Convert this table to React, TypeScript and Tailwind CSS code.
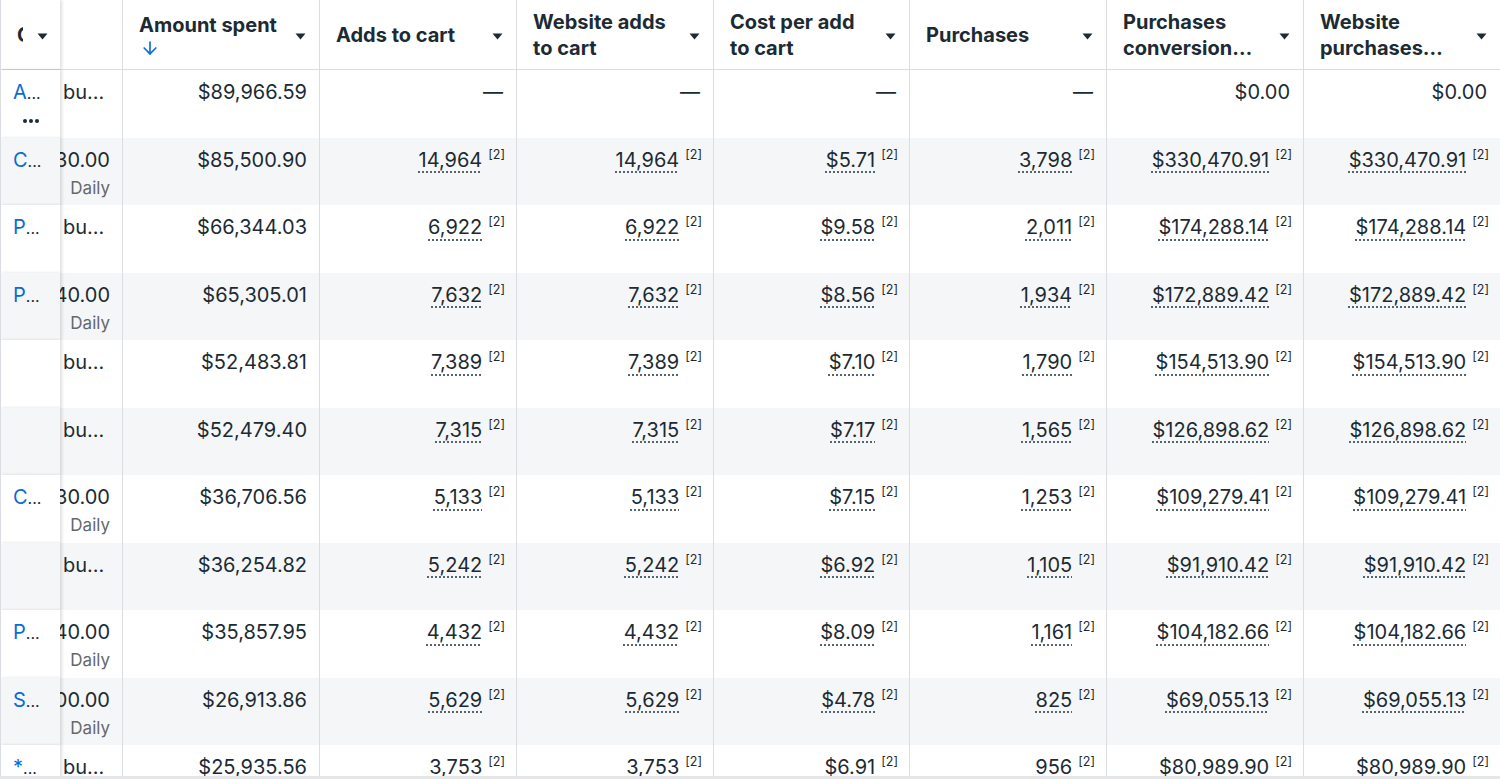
import { ArrowDown } from "lucide-react";

type Row = {
  name: string;
  budget: "bu" | string;
  spent: string;
  vals: string[];
};

const rows: Row[] = [
  { name: "A", budget: "bu", spent: "$89,966.59", vals: ["—", "—", "—", "—", "$0.00", "$0.00"] },
  { name: "C", budget: "$1,230.00", spent: "$85,500.90", vals: ["14,964", "14,964", "$5.71", "3,798", "$330,470.91", "$330,470.91"] },
  { name: "P", budget: "bu", spent: "$66,344.03", vals: ["6,922", "6,922", "$9.58", "2,011", "$174,288.14", "$174,288.14"] },
  { name: "P", budget: "$1,140.00", spent: "$65,305.01", vals: ["7,632", "7,632", "$8.56", "1,934", "$172,889.42", "$172,889.42"] },
  { name: "", budget: "bu", spent: "$52,483.81", vals: ["7,389", "7,389", "$7.10", "1,790", "$154,513.90", "$154,513.90"] },
  { name: "", budget: "bu", spent: "$52,479.40", vals: ["7,315", "7,315", "$7.17", "1,565", "$126,898.62", "$126,898.62"] },
  { name: "C", budget: "$1,230.00", spent: "$36,706.56", vals: ["5,133", "5,133", "$7.15", "1,253", "$109,279.41", "$109,279.41"] },
  { name: "", budget: "bu", spent: "$36,254.82", vals: ["5,242", "5,242", "$6.92", "1,105", "$91,910.42", "$91,910.42"] },
  { name: "P", budget: "$1,140.00", spent: "$35,857.95", vals: ["4,432", "4,432", "$8.09", "1,161", "$104,182.66", "$104,182.66"] },
  { name: "S", budget: "$1,000.00", spent: "$26,913.86", vals: ["5,629", "5,629", "$4.78", "825", "$69,055.13", "$69,055.13"] },
  { name: "*", budget: "bu", spent: "$25,935.56", vals: ["3,753", "3,753", "$6.91", "956", "$80,989.90", "$80,989.90"] },
];

const headers = [
  ["Adds to cart"],
  ["Website adds", "to cart"],
  ["Cost per add", "to cart"],
  ["Purchases"],
  ["Purchases", "conversion…"],
  ["Website", "purchases…"],
];

function Caret() {
  return (
    <svg width="11" height="7" viewBox="0 0 11 7" className="shrink-0">
      <path d="M0.5 0.5h10L5.5 6.5z" fill="#1c2b33" />
    </svg>
  );
}

function Value({ v }: { v: string }) {
  const plain = v === "—" || v === "$0.00";
  if (plain) return <span className="mr-[1px] text-[20px] leading-6">{v}</span>;
  return (
    <span className="-mr-[1px] flex items-start">
      <span className="text-[20px] leading-6 underline decoration-dotted decoration-[1.5px] underline-offset-[5px] decoration-[#56646c]">
        {v}
      </span>
      <span className="ml-[6px] mt-[1px] text-[12.5px] leading-none">[2]</span>
    </span>
  );
}

export default function App() {
  return (
    <div
      className="flex h-[779px] w-[1500px] flex-col overflow-hidden bg-white text-[#1c2b33]"
      style={{ fontFamily: "Inter, 'Noto Sans', sans-serif" }}
    >
      <div className="flex-1 overflow-hidden">
        {/* Header */}
        <div className="flex h-[70px] border-b border-[#dadde1] bg-white text-[20px] font-bold leading-[26px]">
          <div className="relative z-10 flex w-[60px] shrink-0 items-center border-l border-[#dadde1] bg-white pl-[16px] shadow-[2px_0_3px_rgba(0,0,0,0.13)]">
            <span className="w-[6px] overflow-hidden whitespace-nowrap">Campaign</span>
            <span className="ml-[14px] mt-[3px]">
              <Caret />
            </span>
          </div>
          <div className="w-[63px] shrink-0 border-r border-[#dadde1]" />
          <div className="flex w-[197px] shrink-0 items-center justify-between border-r border-[#dadde1] pl-[16px] pr-[13px]">
            <div className="flex flex-col">
              <span className="whitespace-nowrap">Amount spent</span>
              <ArrowDown className="ml-[1px] h-[20px] w-[20px] text-[#0a6bd6]" strokeWidth={2} />
            </div>
            <span className="mt-[4px]">
              <Caret />
            </span>
          </div>
          {headers.map((h, i) => (
            <div
              key={i}
              className={`flex shrink-0 items-center justify-between pl-[16px] pr-[13px] ${
                i === 2 || i === 5 ? "w-[196px]" : "w-[197px]"
              } ${i < 5 ? "border-r border-[#dadde1]" : ""}`}
            >
              <div className="flex flex-col">
                {h.map((line) => (
                  <span key={line} className="whitespace-nowrap">
                    {line}
                  </span>
                ))}
              </div>
              <span className="mt-[4px]">
                <Caret />
              </span>
            </div>
          ))}
        </div>

        {/* Rows */}
        {rows.map((r, ri) => (
          <div key={ri} className={`flex h-[67.5px] ${ri % 2 ? "bg-[#f5f6f7]" : "bg-white"}`}>
            <div className="relative z-10 flex w-[60px] shrink-0 flex-col border-l border-[#dadde1] bg-inherit pl-[12px] pt-[10px] shadow-[2px_0_3px_rgba(0,0,0,0.13)]">
              {r.name && (
                <span className="text-[20px] leading-6">
                  <span className="text-[#0a6bd6]">{r.name}</span>
                  <span className="text-[16px]">...</span>
                </span>
              )}
              {ri === 0 && (
                <span className="ml-[10px] mt-[14px] flex gap-[2px]">
                  <span className="h-[4px] w-[4px] rounded-full bg-[#1c2b33]" />
                  <span className="h-[4px] w-[4px] rounded-full bg-[#1c2b33]" />
                  <span className="h-[4px] w-[4px] rounded-full bg-[#1c2b33]" />
                </span>
              )}
            </div>
            <div className="flex w-[63px] shrink-0 flex-col overflow-hidden border-r border-[#dadde1] pt-[10px]">
              {r.budget === "bu" ? (
                <span className="pl-[3px] text-[20px] leading-6">bu...</span>
              ) : (
                <>
                  <span className="flex justify-end whitespace-nowrap pr-[12px] text-[20px] leading-6">
                    {r.budget}
                  </span>
                  <span className="mt-[4px] flex justify-end pr-[12px] text-[17px] leading-6 text-[#65686c]">
                    Daily
                  </span>
                </>
              )}
            </div>
            <div className="flex w-[197px] shrink-0 justify-end border-r border-[#dadde1] pr-[12px] pt-[10px]">
              <span className="text-[20px] leading-6">{r.spent}</span>
            </div>
            {r.vals.map((v, i) => (
              <div
                key={i}
                className={`flex shrink-0 justify-end pr-[12px] pt-[10px] ${
                  i === 2 || i === 5 ? "w-[196px]" : "w-[197px]"
                } ${i < 5 ? "border-r border-[#dadde1]" : ""}`}
              >
                <Value v={v} />
              </div>
            ))}
          </div>
        ))}
      </div>
      <div className="h-[3px] shrink-0 bg-[#e4e6e9]" />
    </div>
  );
}
